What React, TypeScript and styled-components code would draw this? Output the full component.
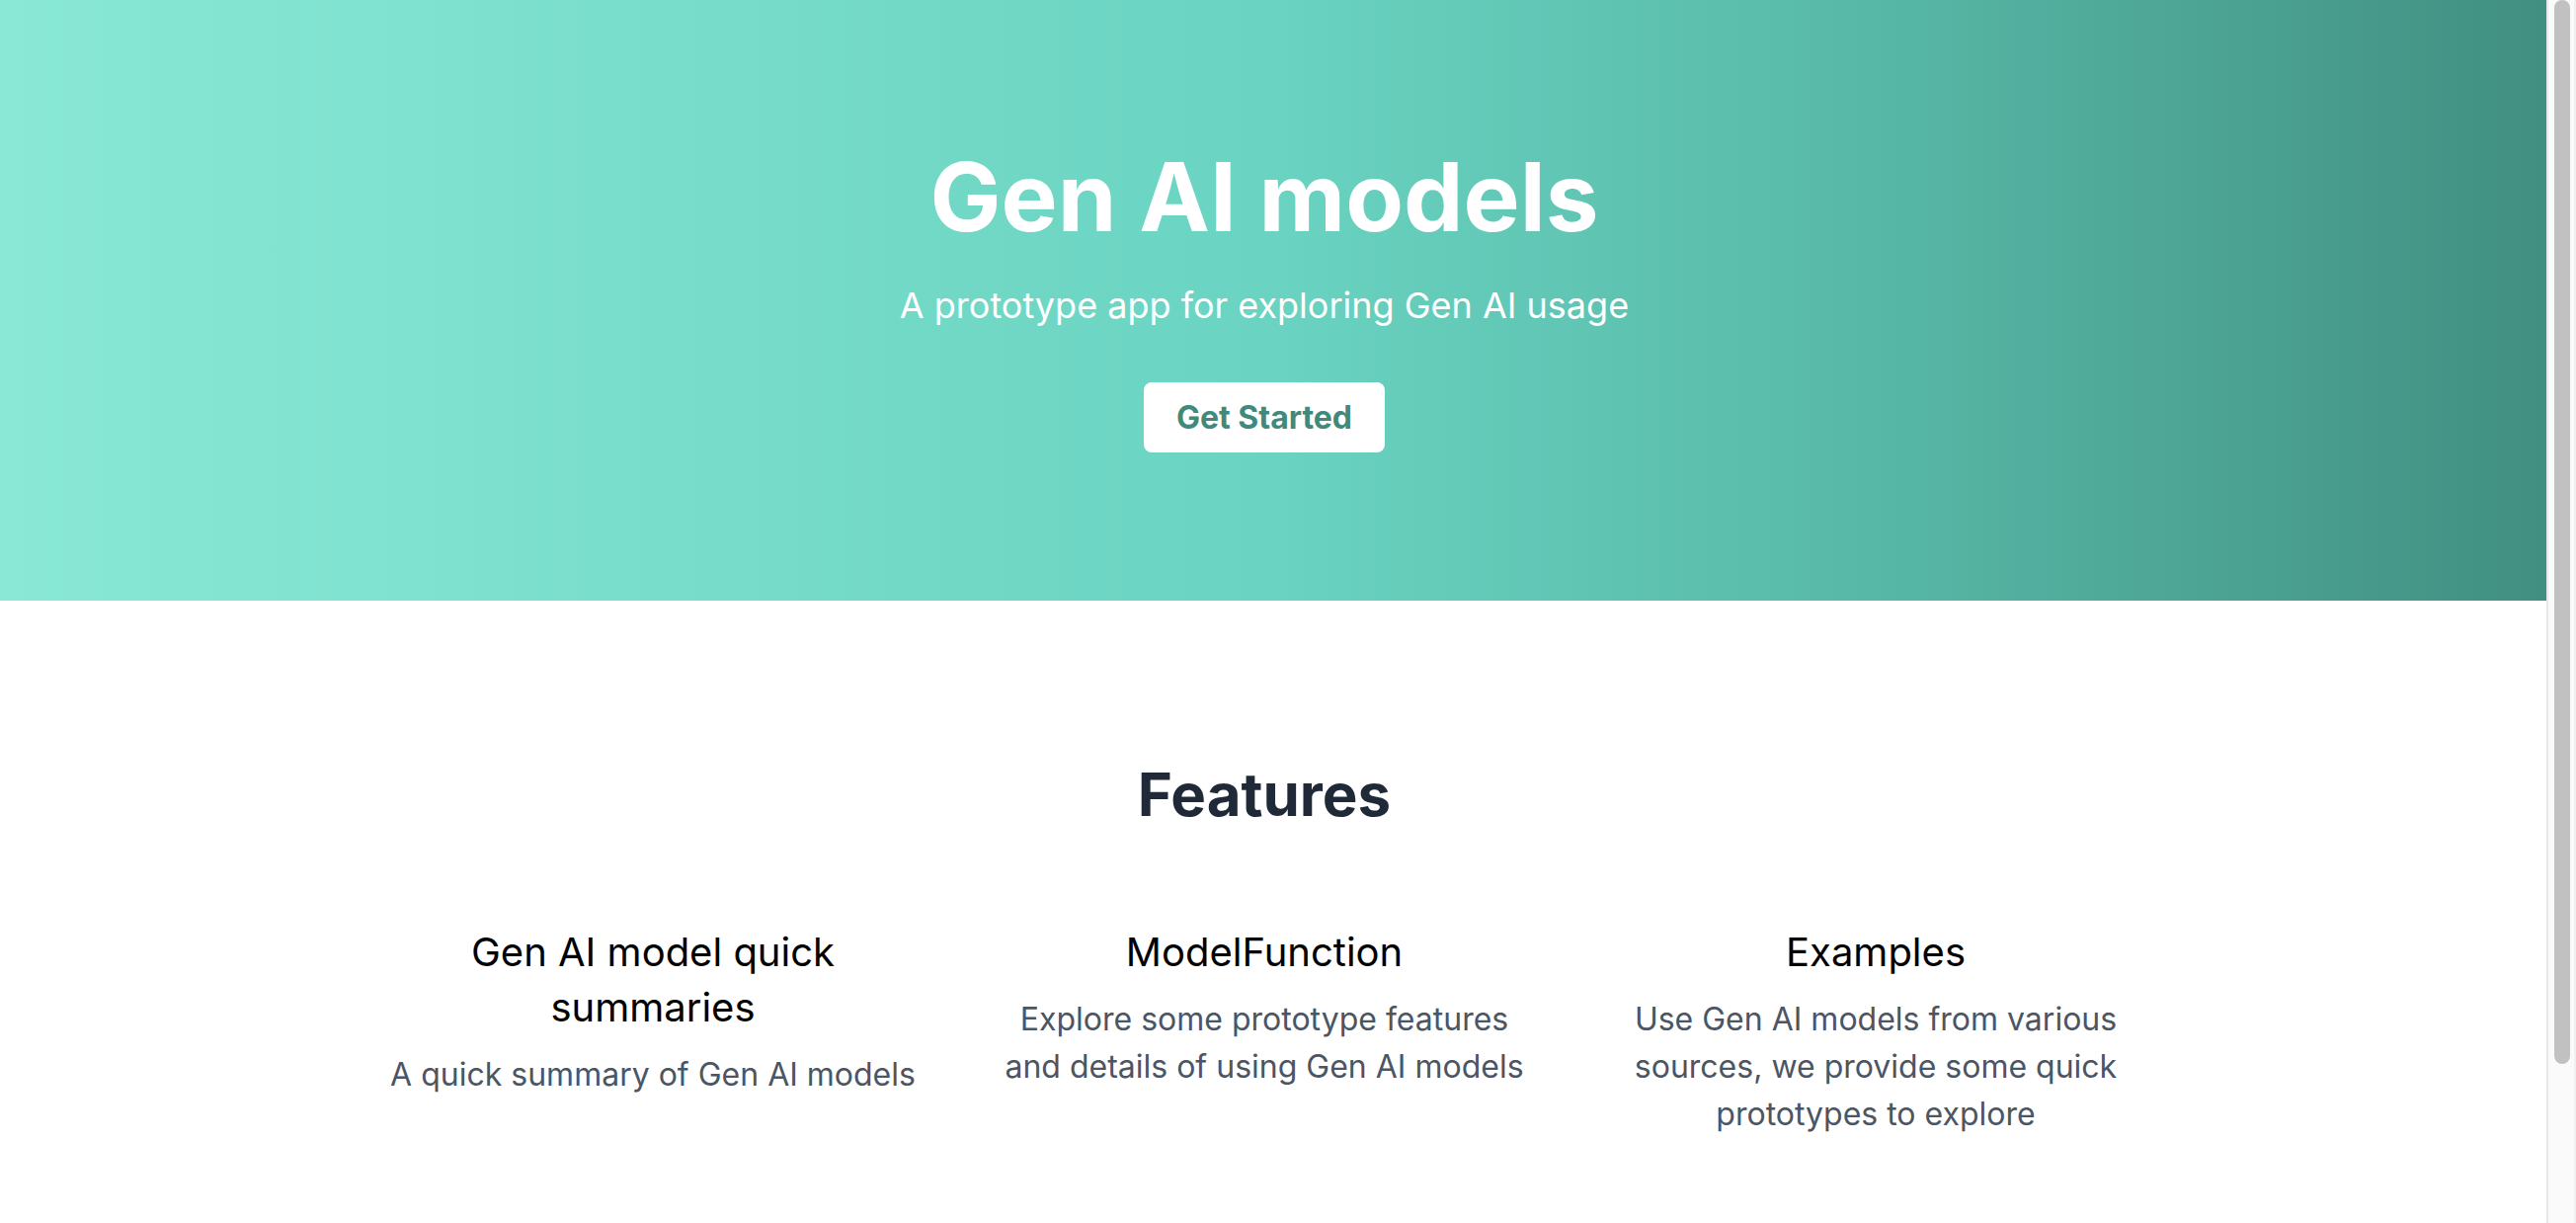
import styled, { createGlobalStyle } from 'styled-components';

const GlobalStyle = createGlobalStyle`
  html,
  body {
    margin: 0;
    height: 100%;
    overflow: hidden;
    background: #ffffff;
  }
  body {
    font-family: Inter, 'Noto Sans', 'Liberation Sans', sans-serif;
    -webkit-font-smoothing: antialiased;
  }
  * {
    box-sizing: border-box;
  }
`;

const features = [
  {
    title: 'Gen AI model quick summaries',
    text: 'A quick summary of Gen AI models',
  },
  {
    title: 'ModelFunction',
    text: 'Explore some prototype features and details of using Gen AI models',
  },
  {
    title: 'Examples',
    text: 'Use Gen AI models from various sources, we provide some quick prototypes to explore',
  },
];

function App() {
  return (
    <Shell>
      <GlobalStyle />
      <Page>
        <Hero>
          <Container>
            <HeroTitle>Gen AI models</HeroTitle>
            <HeroSubtitle>A prototype app for exploring Gen AI usage</HeroSubtitle>
            <StartButton>Get Started</StartButton>
          </Container>
        </Hero>
        <FeatureSection>
          <Container>
            <SectionTitle>Features</SectionTitle>
            <FeatureGrid>
              {features.map((item) => (
                <FeatureCard key={item.title}>
                  <FeatureTitle>{item.title}</FeatureTitle>
                  <FeatureText>{item.text}</FeatureText>
                </FeatureCard>
              ))}
            </FeatureGrid>
          </Container>
        </FeatureSection>
      </Page>
      <ScrollTrack>
        <ScrollThumb />
      </ScrollTrack>
    </Shell>
  );
}

export default App;

const Shell = styled.div`
  display: flex;
  height: 100vh;
  width: 100%;
`;

const Page = styled.main`
  flex: 1;
  min-width: 0;
  overflow: hidden;
`;

// tailwind-style container: full width, capped, not centred
const Container = styled.div`
  width: 100%;
  max-width: 2560px;
  display: flex;
  flex-direction: column;
  align-items: center;
  text-align: center;
`;

const Hero = styled.section`
  height: 608px;
  display: flex;
  align-items: center;
  background: linear-gradient(
    to right,
    #89e8d6 0%,
    #6ad3c1 50%,
    #56b6a5 75%,
    #418f81 100%
  );
  color: #ffffff;
`;

const HeroTitle = styled.h1`
  margin: 0 0 34px;
  font-size: 96px;
  line-height: 1;
  font-weight: 700;
`;

const HeroSubtitle = styled.p`
  margin: 0 0 50px;
  font-size: 36px;
  line-height: 56px;
  font-weight: 400;
`;

const StartButton = styled.button`
  height: 71px;
  padding: 0 33px;
  border: none;
  border-radius: 8px;
  background: #ffffff;
  color: #3f8a7d;
  font-family: inherit;
  font-size: 32px;
  font-weight: 700;
  cursor: pointer;
`;

const FeatureSection = styled.section`
  padding: 160px 0;
`;

const SectionTitle = styled.h2`
  margin: 0 0 96px;
  font-size: 60px;
  line-height: 72px;
  font-weight: 700;
  color: #1f2937;
`;

const FeatureGrid = styled.div`
  display: grid;
  grid-template-columns: repeat(3, 540px);
  column-gap: 79px;
`;

const FeatureCard = styled.div`
  display: flex;
  flex-direction: column;
  align-items: center;
  gap: 16px;
`;

const FeatureTitle = styled.h3`
  margin: 0;
  font-size: 40px;
  line-height: 56px;
  font-weight: 400;
  color: #000000;
`;

const FeatureText = styled.p`
  margin: 0;
  font-size: 32px;
  line-height: 48px;
  color: #4b5563;
`;

const ScrollTrack = styled.div`
  flex: none;
  width: 30px;
  height: 100%;
  padding: 0 4px 0 6px;
  background: #fafafa;
  border-left: 2px solid #e8e8e8;
  border-right: 2px solid #f0f0f0;
`;

const ScrollThumb = styled.div`
  width: 16px;
  height: 1077px;
  border-radius: 8px;
  background: #c1c1c1;
`;
